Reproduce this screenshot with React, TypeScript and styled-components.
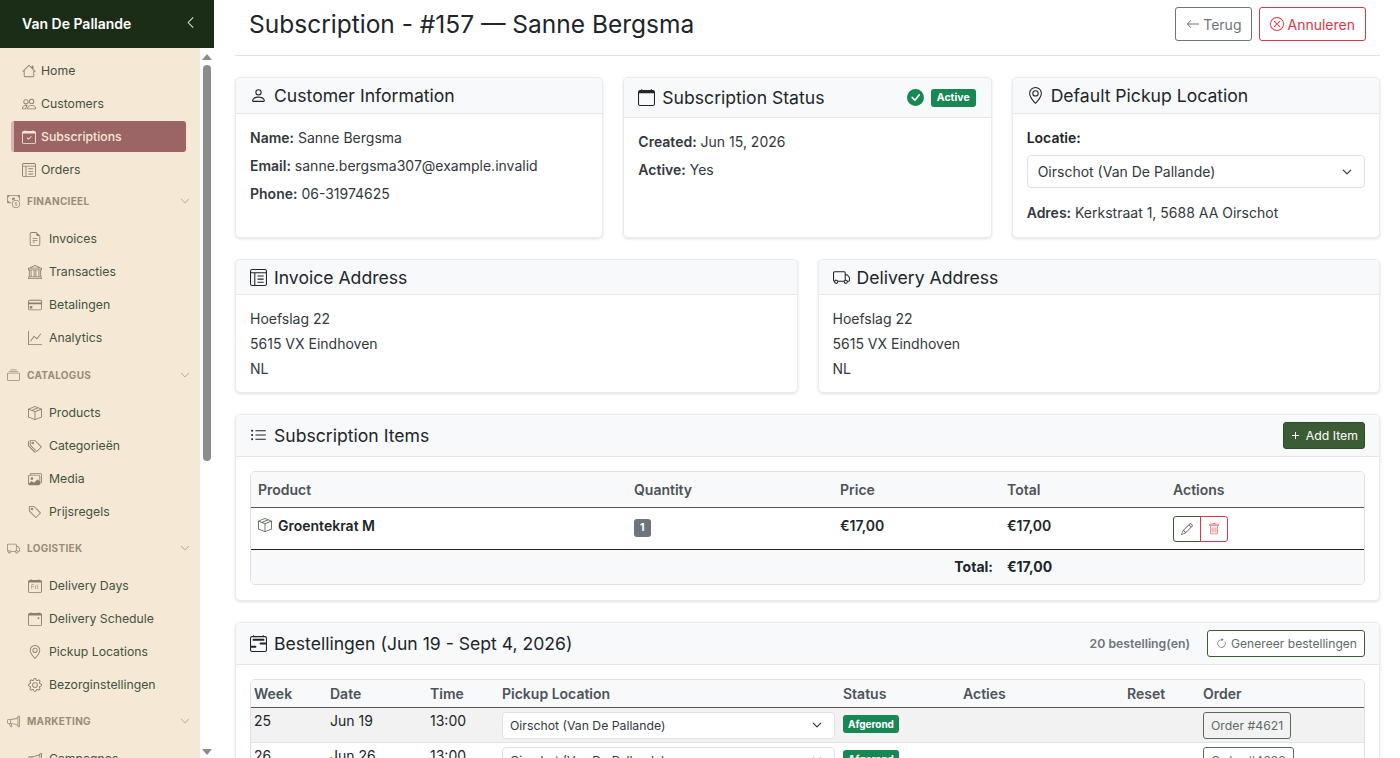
import React from 'react';
import styled, { createGlobalStyle } from 'styled-components';
import {
  BsHouse, BsPeople, BsCalendarCheck, BsLayoutTextWindowReverse, BsCashCoin, BsFileEarmarkText, BsBank, BsCreditCard,
  BsGraphUp, BsCollection, BsBoxSeam, BsTags, BsImages, BsTag, BsTruck, BsCalendarDay, BsCalendarEvent,
  BsGeoAlt, BsGear, BsMegaphone, BsChevronLeft, BsChevronDown, BsArrowLeft, BsXCircle, BsPerson,
  BsCalendar, BsCheckCircleFill, BsListUl, BsPlus, BsPencil, BsTrash, BsCalendar2Range, BsArrowClockwise,
} from 'react-icons/bs';

const chevron =
  "data:image/svg+xml,%3csvg xmlns='http://www.w3.org/2000/svg' viewBox='0 0 16 16'%3e%3cpath fill='none' stroke='%23343a40' stroke-linecap='round' stroke-linejoin='round' stroke-width='2' d='m2 5 6 6 6-6'/%3e%3c/svg%3e";

const GlobalStyle = createGlobalStyle`
  html, body { margin: 0; padding: 0; height: 100%; overflow: hidden; background: #fff; }
  body { font-family: Inter, "Liberation Sans", sans-serif; color: #212529; font-size: 14px; }
  * { box-sizing: border-box; }
`;

const Shell = styled.div`
  display: flex;
  height: 758px;
  overflow: hidden;
`;

const Sidebar = styled.aside`
  width: 214px;
  flex: none;
  display: flex;
  flex-direction: column;
  height: 100%;
`;

const Brand = styled.div`
  height: 48px;
  flex: none;
  background: #1b2d17;
  color: #fff;
  display: flex;
  align-items: center;
  justify-content: space-between;
  padding: 0 17px 1px 22px;
  font-size: 14px;
  font-weight: 600;
  svg { margin-top: -3px; }
`;

const SideBody = styled.div`
  flex: 1;
  min-height: 0;
  display: flex;
`;

const Nav = styled.nav`
  width: 200px;
  flex: none;
  overflow: hidden;
  background: #f5e9d5;
  padding-top: 7px;
`;

const Rail = styled.div`
  flex: 1;
  display: flex;
  flex-direction: column;
  align-items: center;
`;

const RailArrow = styled.div<{ $down?: boolean }>`
  width: 0;
  height: 0;
  border-left: 5px solid transparent;
  border-right: 5px solid transparent;
  border-bottom: ${(p) => (p.$down ? '0' : '6px solid #8c8c8c')};
  border-top: ${(p) => (p.$down ? '6px solid #8c8c8c' : '0')};
  margin-top: ${(p) => (p.$down ? 'auto' : '6px')};
  margin-bottom: ${(p) => (p.$down ? '3px' : '0')};
`;

const RailThumb = styled.div`
  width: 8px;
  height: 396px;
  margin-top: 5px;
  background: #8c8c8c;
  border-radius: 4px;
`;

const NavItem = styled.a<{ $sub?: boolean; $active?: boolean }>`
  display: flex;
  align-items: center;
  gap: ${(p) => (p.$sub ? '7px' : '5px')};
  height: 31px;
  margin: 0 14px 2px 11px;
  padding-left: ${(p) => (p.$sub ? '14px' : '8px')};
  font-size: 12.25px;
  border-radius: 3px;
  font-weight: ${(p) => (p.$active ? 500 : 400)};
  color: ${(p) => (p.$active ? '#f5e9d5' : '#43523f')};
  background: ${(p) => (p.$active ? '#9c6565' : 'transparent')};
  border-left: 3px solid ${(p) => (p.$active ? '#d9b3b3' : 'transparent')};
  svg {
    font-size: 14px;
    flex: none;
    color: ${(p) => (p.$active ? '#f5e9d5' : '#8b7f6b')};
  }
`;

const Group = styled.div`
  &:first-of-type { margin: -1px 0 7px; }
  & + & { margin-top: 6px; }
`;

const SectionHead = styled.div`
  display: flex;
  align-items: center;
  height: 30px;
  margin-bottom: 7px;
  padding: 0 9px 0 7px;
  font-size: 10px;
  font-weight: 700;
  letter-spacing: 0.3px;
  color: #9a8c76;
  svg { font-size: 13px; flex: none; }
  svg:first-child { margin-right: 7px; }
  svg:last-child { margin-left: auto; font-size: 10px; margin-right: 1px; }
`;

const Main = styled.main`
  flex: 1;
  min-width: 0;
  padding: 0 20px 0 21px;
  overflow: hidden;
`;

const TopBar = styled.header`
  height: 56px;
  display: flex;
  align-items: center;
  justify-content: space-between;
  padding: 0 14px 7px;
  margin-bottom: 21px;
  border-bottom: 1px solid #dee2e6;
`;

const PageTitle = styled.h1`
  margin: 0;
  font-size: 24.5px;
  font-weight: 400;
  color: #212529;
`;

const TopActions = styled.div`
  display: flex;
  gap: 7px;
`;

const OutlineButton = styled.button<{ $color: string }>`
  height: 34px;
  display: inline-flex;
  align-items: center;
  gap: 3px;
  padding: 0 10px;
  background: #fff;
  border: 1px solid ${(p) => p.$color};
  border-radius: 3px;
  color: ${(p) => p.$color};
  font: 400 14px Inter, "Liberation Sans", sans-serif;
`;

const Row = styled.div<{ $cols: number }>`
  display: grid;
  grid-template-columns: repeat(${(p) => p.$cols}, minmax(0, 1fr));
  gap: 20px;
  margin-bottom: 21px;
`;

const Card = styled.section`
  background: #fff;
  border: 1px solid #e9ecef;
  border-radius: 5px;
  box-shadow: 0 1px 3px rgba(0, 0, 0, 0.12);
  overflow: hidden;
`;

const CardHead = styled.div<{ $h: number }>`
  height: ${(p) => p.$h}px;
  display: flex;
  align-items: center;
  gap: 8px;
  padding: 0 14px;
  background: #f8f9fa;
  border-bottom: 1px solid #e5e7e9;
`;

const CardTitle = styled.h5`
  margin: 0;
  font-size: 17.6px;
  font-weight: 400;
  display: flex;
  align-items: center;
  gap: 7px;
  color: #212529;
  svg { font-size: 17px; flex: none; }
`;

const HeadRight = styled.div`
  margin-left: auto;
  display: flex;
  align-items: center;
  gap: 6px;
`;

const StatusRight = styled(HeadRight)`
  gap: 7px;
  margin-right: 1px;
`;

const CardBody = styled.div`
  padding: 15px 14px;
`;

const Line = styled.p`
  margin: 0 0 10px;
  line-height: 18px;
  font-size: 14px;
  color: #33383d;
  b { font-weight: 600; }
`;

const AddressLine = styled(Line)`
  margin: 16px 0 0;
`;

const AddressBody = styled.div`
  padding: 11px 14px;
  font-size: 14px;
  line-height: 25px;
  color: #33383d;
`;

const FieldLabel = styled.label`
  display: block;
  font-weight: 600;
  font-size: 14px;
  margin: 0 0 9px;
`;

const Select = styled.select<{ $small?: boolean }>`
  appearance: none;
  display: block;
  width: 100%;
  height: ${(p) => (p.$small ? '27px' : '33px')};
  padding: 0 30px 0 ${(p) => (p.$small ? '7px' : '10px')};
  border: 1px solid #dee2e6;
  border-radius: 4px;
  background: #fff url("${chevron}") no-repeat right 12px center / 10px 10px;
  color: #33383d;
  font: 400 ${(p) => (p.$small ? '12.25px' : '14px')} Inter, "Liberation Sans", sans-serif;
`;

const Badge = styled.span<{ $bg: string }>`
  display: inline-block;
  padding: 3px 6px;
  border-radius: 3px;
  font-size: 10.5px;
  font-weight: 700;
  line-height: 12px;
  color: #fff;
  background: ${(p) => p.$bg};
`;

const TableBox = styled.div`
  border: 1px solid #dee2e6;
  border-radius: 5px;
  overflow: hidden;
`;

const Table = styled.table`
  width: calc(100% + 1px);
  margin-left: -1px;
  table-layout: fixed;
  border-collapse: collapse;
  font-size: 14px;
  color: #212529;
`;

const Th = styled.th<{ $tight?: boolean }>`
  text-align: left;
  font-weight: 600;
  color: #4d5359;
  background: #f8f9fa;
  height: ${(p) => (p.$tight ? '27px' : '35px')};
  padding: 0 ${(p) => (p.$tight ? '4px' : '8px')};
  border-bottom: 1px solid #555;
`;

const ItemsBody = styled.div`
  padding: 14px 14px 15px;
`;

const ItemTd = styled.td`
  height: 42px;
  padding: 9px 8px 0;
  vertical-align: top;
  font-weight: 600;
  border-bottom: 1px solid #222;
`;

const ProductCell = styled.span`
  display: inline-flex;
  align-items: center;
  gap: 6px;
  svg { color: #5b6b5a; font-size: 14px; }
`;

const FootTd = styled.td<{ $right?: boolean }>`
  height: 35px;
  padding: 0 ${(p) => (p.$right ? '6px' : '8px')} 0 8px;
  font-weight: 700;
  background: #f8f9fa;
  text-align: ${(p) => (p.$right ? 'right' : 'left')};
`;

const QtyBadge = styled(Badge)`
  margin-top: 2px;
`;

const ActionGroup = styled.div`
  display: inline-flex;
  margin-top: -1px;
`;

const IconBtn = styled.button<{ $color: string; $side: 'l' | 'r' }>`
  width: 28px;
  height: 26px;
  display: flex;
  align-items: center;
  justify-content: center;
  padding: 0;
  background: #fff;
  border: 1px solid ${(p) => p.$color};
  border-radius: ${(p) => (p.$side === 'l' ? '3px 0 0 3px' : '0 3px 3px 0')};
  margin-left: ${(p) => (p.$side === 'r' ? '-1px' : '0')};
  color: ${(p) => (p.$side === 'l' ? '#6b7568' : '#dc6a77')};
  font-size: 12px;
`;

const AddButton = styled.button`
  height: 27px;
  display: inline-flex;
  align-items: center;
  gap: 3px;
  padding: 0 6px 0 4px;
  border: 1px solid #2f4a2a;
  border-radius: 3px;
  background: #3c5c35;
  color: #fff;
  font: 400 12.25px Inter, "Liberation Sans", sans-serif;
  svg { font-size: 15px; }
`;

const CountText = styled.span`
  font-size: 12.25px;
  font-weight: 600;
  color: #6c757d;
  margin-right: 11px;
`;

const GenButton = styled.button`
  height: 27px;
  display: inline-flex;
  align-items: center;
  gap: 4px;
  padding: 0 7px 0 8px;
  border: 1px solid #3c5c35;
  border-radius: 3px;
  background: #fff;
  color: #5f6b66;
  font: 400 12.1px Inter, "Liberation Sans", sans-serif;
  svg { font-size: 11px; }
`;

const OrdersBody = styled.div`
  padding: 14px 14px 0;
`;

const OrderTd = styled.td<{ $striped?: boolean }>`
  padding: 4px 4px 3px;
  height: 35px;
  vertical-align: top;
  font-size: 14px;
  line-height: 18px;
  background: ${(p) => (p.$striped ? '#f2f2f2' : '#fff')};
  border-bottom: 1px solid #dee2e6;
`;

const StatusBadge = styled(Badge)`
  display: block;
  width: fit-content;
  margin-top: 3px;
  padding: 3px 5px;
  font-size: 10px;
`;

const OrderButton = styled.button`
  display: block;
  height: 27px;
  padding: 0 7px;
  border: 1px solid #5b6b5a;
  border-radius: 3px;
  background: transparent;
  color: #5f6b66;
  font: 400 12.25px Inter, "Liberation Sans", sans-serif;
`;

type NavEntry = { label: string; icon: React.ReactNode; active?: boolean };

const topItems: NavEntry[] = [
  { label: 'Home', icon: <BsHouse /> },
  { label: 'Customers', icon: <BsPeople /> },
  { label: 'Subscriptions', icon: <BsCalendarCheck />, active: true },
  { label: 'Orders', icon: <BsLayoutTextWindowReverse /> },
];

const sections: { title: string; icon: React.ReactNode; items: NavEntry[] }[] = [
  {
    title: 'FINANCIEEL',
    icon: <BsCashCoin />,
    items: [
      { label: 'Invoices', icon: <BsFileEarmarkText /> },
      { label: 'Transacties', icon: <BsBank /> },
      { label: 'Betalingen', icon: <BsCreditCard /> },
      { label: 'Analytics', icon: <BsGraphUp /> },
    ],
  },
  {
    title: 'CATALOGUS',
    icon: <BsCollection />,
    items: [
      { label: 'Products', icon: <BsBoxSeam /> },
      { label: 'Categorieën', icon: <BsTags /> },
      { label: 'Media', icon: <BsImages /> },
      { label: 'Prijsregels', icon: <BsTag /> },
    ],
  },
  {
    title: 'LOGISTIEK',
    icon: <BsTruck />,
    items: [
      { label: 'Delivery Days', icon: <BsCalendarDay /> },
      { label: 'Delivery Schedule', icon: <BsCalendarEvent /> },
      { label: 'Pickup Locations', icon: <BsGeoAlt /> },
      { label: 'Bezorginstellingen', icon: <BsGear /> },
    ],
  },
  {
    title: 'MARKETING',
    icon: <BsMegaphone />,
    items: [{ label: 'Campagnes', icon: <BsMegaphone /> }],
  },
];

const orders = [
  { week: 25, date: 'Jun 19', no: 4621 },
  { week: 26, date: 'Jun 26', no: 4622 },
];

const App: React.FC = () => {
  return (
    <Shell>
      <GlobalStyle />
      <Sidebar>
        <Brand>
          Van De Pallande
          <BsChevronLeft size={13} />
        </Brand>
        <SideBody>
          <Nav>
            {topItems.map((item) => (
              <NavItem key={item.label} $active={item.active}>
                {item.icon}
                {item.label}
              </NavItem>
            ))}
            {sections.map((section) => (
              <Group key={section.title}>
                <SectionHead>
                  {section.icon}
                  {section.title}
                  <BsChevronDown />
                </SectionHead>
                {section.items.map((item) => (
                  <NavItem key={item.label} $sub>
                    {item.icon}
                    {item.label}
                  </NavItem>
                ))}
              </Group>
            ))}
          </Nav>
          <Rail>
            <RailArrow />
            <RailThumb />
            <RailArrow $down />
          </Rail>
        </SideBody>
      </Sidebar>

      <Main>
        <TopBar>
          <PageTitle>Subscription - #157 — Sanne Bergsma</PageTitle>
          <TopActions>
            <OutlineButton $color="#6c757d">
              <BsArrowLeft />
              Terug
            </OutlineButton>
            <OutlineButton $color="#dc3545">
              <BsXCircle />
              Annuleren
            </OutlineButton>
          </TopActions>
        </TopBar>

        <Row $cols={3}>
          <Card>
            <CardHead $h={36}>
              <CardTitle><BsPerson />Customer Information</CardTitle>
            </CardHead>
            <CardBody>
              <Line><b>Name:</b> Sanne Bergsma</Line>
              <Line><b>Email:</b> sanne.bergsma307@example.invalid</Line>
              <Line><b>Phone:</b> 06-31974625</Line>
            </CardBody>
          </Card>
          <Card>
            <CardHead $h={40}>
              <CardTitle><BsCalendar />Subscription Status</CardTitle>
              <StatusRight>
                <BsCheckCircleFill color="#198754" size={17} />
                <Badge $bg="#198754">Active</Badge>
              </StatusRight>
            </CardHead>
            <CardBody>
              <Line><b>Created:</b> Jun 15, 2026</Line>
              <Line><b>Active:</b> Yes</Line>
            </CardBody>
          </Card>
          <Card>
            <CardHead $h={36}>
              <CardTitle><BsGeoAlt />Default Pickup Location</CardTitle>
            </CardHead>
            <CardBody>
              <FieldLabel>Locatie:</FieldLabel>
              <Select defaultValue="o">
                <option value="o">Oirschot (Van De Pallande)</option>
              </Select>
              <AddressLine><b>Adres:</b> Kerkstraat 1, 5688 AA Oirschot</AddressLine>
            </CardBody>
          </Card>
        </Row>

        <Row $cols={2}>
          <Card>
            <CardHead $h={35}>
              <CardTitle><BsLayoutTextWindowReverse />Invoice Address</CardTitle>
            </CardHead>
            <AddressBody>Hoefslag 22<br />5615 VX Eindhoven<br />NL</AddressBody>
          </Card>
          <Card>
            <CardHead $h={35}>
              <CardTitle><BsTruck />Delivery Address</CardTitle>
            </CardHead>
            <AddressBody>Hoefslag 22<br />5615 VX Eindhoven<br />NL</AddressBody>
          </Card>
        </Row>

        <Row $cols={1}>
          <Card>
            <CardHead $h={42}>
              <CardTitle><BsListUl />Subscription Items</CardTitle>
              <HeadRight>
                <AddButton><BsPlus />Add Item</AddButton>
              </HeadRight>
            </CardHead>
            <ItemsBody>
              <TableBox>
                <Table>
                  <colgroup>
                    <col style={{ width: 376 }} />
                    <col style={{ width: 206 }} />
                    <col style={{ width: 167 }} />
                    <col style={{ width: 166 }} />
                    <col />
                  </colgroup>
                  <thead>
                    <tr>
                      <Th>Product</Th>
                      <Th>Quantity</Th>
                      <Th>Price</Th>
                      <Th>Total</Th>
                      <Th>Actions</Th>
                    </tr>
                  </thead>
                  <tbody>
                    <tr>
                      <ItemTd><ProductCell><BsBoxSeam />Groentekrat M</ProductCell></ItemTd>
                      <ItemTd><QtyBadge $bg="#6c757d">1</QtyBadge></ItemTd>
                      <ItemTd>€17,00</ItemTd>
                      <ItemTd>€17,00</ItemTd>
                      <ItemTd>
                        <ActionGroup>
                          <IconBtn $color="#3c5c35" $side="l"><BsPencil /></IconBtn>
                          <IconBtn $color="#dc3545" $side="r"><BsTrash /></IconBtn>
                        </ActionGroup>
                      </ItemTd>
                    </tr>
                  </tbody>
                  <tfoot>
                    <tr>
                      <FootTd colSpan={3} $right>Total:</FootTd>
                      <FootTd>€17,00</FootTd>
                      <FootTd />
                    </tr>
                  </tfoot>
                </Table>
              </TableBox>
            </ItemsBody>
          </Card>
        </Row>

        <Card>
          <CardHead $h={42}>
            <CardTitle><BsCalendar2Range />Bestellingen (Jun 19 - Sept 4, 2026)</CardTitle>
            <HeadRight>
              <CountText>20 bestelling(en)</CountText>
              <GenButton><BsArrowClockwise />Genereer bestellingen</GenButton>
            </HeadRight>
          </CardHead>
          <OrdersBody>
            <TableBox>
              <Table>
                <colgroup>
                  <col style={{ width: 76 }} />
                  <col style={{ width: 100 }} />
                  <col style={{ width: 72 }} />
                  <col style={{ width: 341 }} />
                  <col style={{ width: 120 }} />
                  <col style={{ width: 164 }} />
                  <col style={{ width: 76 }} />
                  <col />
                </colgroup>
                <thead>
                  <tr>
                    <Th $tight>Week</Th>
                    <Th $tight>Date</Th>
                    <Th $tight>Time</Th>
                    <Th $tight>Pickup Location</Th>
                    <Th $tight>Status</Th>
                    <Th $tight>Acties</Th>
                    <Th $tight>Reset</Th>
                    <Th $tight>Order</Th>
                  </tr>
                </thead>
                <tbody>
                  {orders.map((o, i) => (
                    <tr key={o.no}>
                      <OrderTd $striped={i === 0}>{o.week}</OrderTd>
                      <OrderTd $striped={i === 0}>{o.date}</OrderTd>
                      <OrderTd $striped={i === 0}>13:00</OrderTd>
                      <OrderTd $striped={i === 0}>
                        <Select $small defaultValue="o">
                          <option value="o">Oirschot (Van De Pallande)</option>
                        </Select>
                      </OrderTd>
                      <OrderTd $striped={i === 0}><StatusBadge $bg="#198754">Afgerond</StatusBadge></OrderTd>
                      <OrderTd $striped={i === 0} />
                      <OrderTd $striped={i === 0} />
                      <OrderTd $striped={i === 0}><OrderButton>Order #{o.no}</OrderButton></OrderTd>
                    </tr>
                  ))}
                </tbody>
              </Table>
            </TableBox>
          </OrdersBody>
        </Card>
      </Main>
    </Shell>
  );
};

export default App;
